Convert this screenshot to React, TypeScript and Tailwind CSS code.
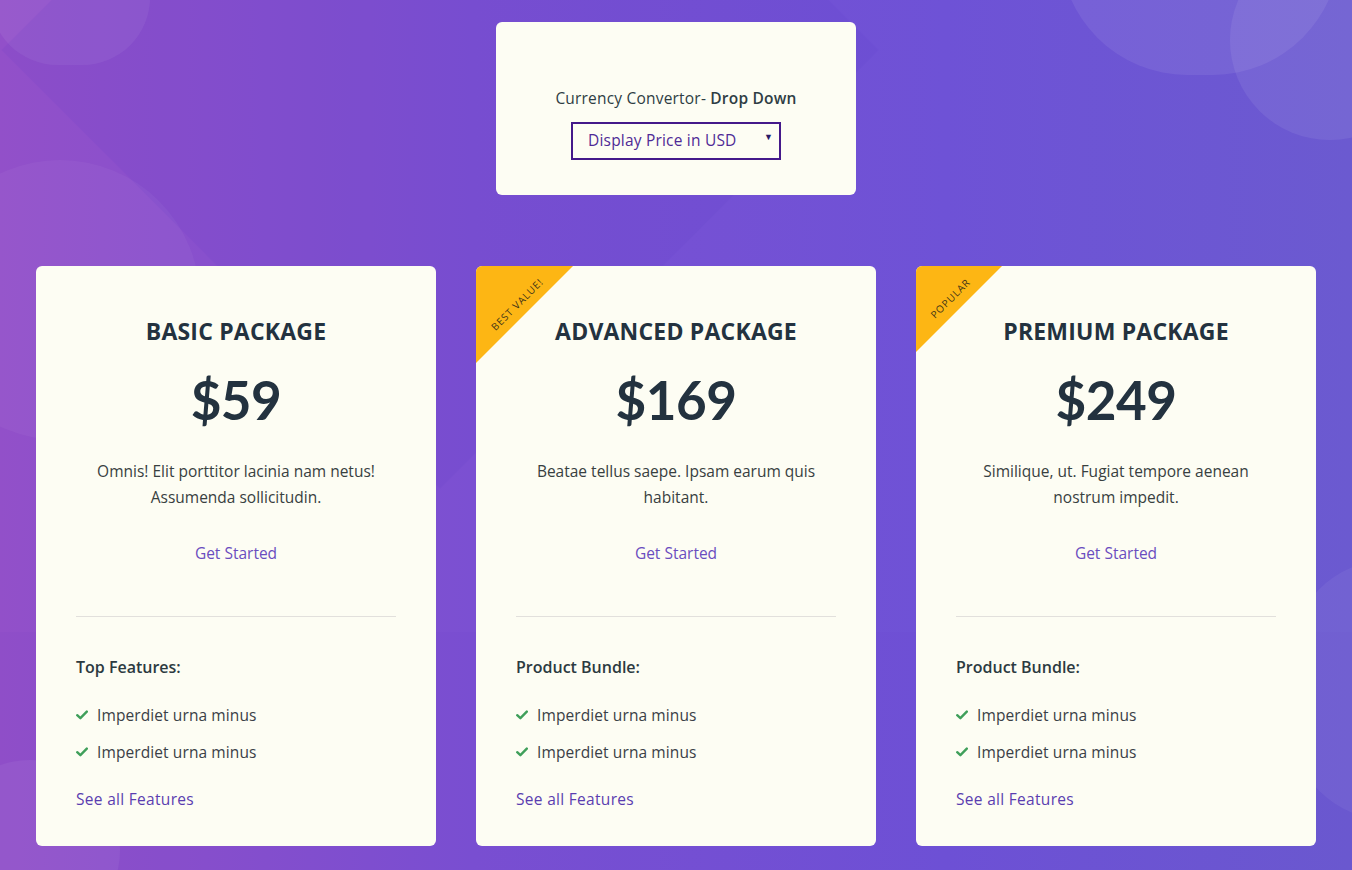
import React from "react";

type Plan = {
  title: string;
  price: string;
  desc: [string, string];
  heading: string;
  ribbon?: { label: string; inner: number; pad: number };
};

const plans: Plan[] = [
  {
    title: "BASIC PACKAGE",
    price: "$59",
    desc: ["Omnis! Elit porttitor lacinia nam netus!", "Assumenda sollicitudin."],
    heading: "Top Features:",
  },
  {
    title: "ADVANCED PACKAGE",
    price: "$169",
    desc: ["Beatae tellus saepe. Ipsam earum quis", "habitant."],
    heading: "Product Bundle:",
    ribbon: { label: "BEST VALUE!", inner: 97, pad: 40 },
  },
  {
    title: "PREMIUM PACKAGE",
    price: "$249",
    desc: ["Similique, ut. Fugiat tempore aenean", "nostrum impedit."],
    heading: "Product Bundle:",
    ribbon: { label: "POPULAR", inner: 86, pad: 34 },
  },
];

function Check() {
  return (
    <svg width="12" height="10" viewBox="0 0 12 10" className="shrink-0">
      <path d="M1.2 5.2 L4.4 8.2 L10.8 1.6" fill="none" stroke="#3f9f5a" strokeWidth="2.4" strokeLinecap="round" strokeLinejoin="round" />
    </svg>
  );
}

function Ribbon({ r }: { r: NonNullable<Plan["ribbon"]> }) {
  const size = r.inner;
  return (
    <div className="absolute left-0 top-0 pointer-events-none" style={{ width: size, height: size }}>
      <svg width={size} height={size} viewBox={`0 0 ${size} ${size}`} className="absolute left-0 top-0">
        <polygon points={`0,0 ${size},0 0,${size}`} fill="#fdb614" />
      </svg>
      <div className="absolute left-0 top-0 flex items-center justify-center" style={{ width: r.pad * 2 + 2, height: r.pad * 2 - 4 }}>
        <span className="-rotate-45 text-[10px] leading-[11px] tracking-[0.9px] text-[#3e3418] whitespace-nowrap">
          {r.label}
        </span>
      </div>
    </div>
  );
}

function Card({ p }: { p: Plan }) {
  return (
    <div className="relative h-[580px] rounded-[6px] bg-[#fdfdf3] overflow-hidden px-10 pt-[51px] flex flex-col text-[#2c3b45]">
      {p.ribbon && <Ribbon r={p.ribbon} />}
      <h2 className="text-center text-[23px] leading-[28px] font-bold tracking-[0.2px] text-[#23323f]">{p.title}</h2>
      <div
        className="mt-[25px] text-center text-[53px] leading-[60px] font-bold text-[#23323f] tracking-[-0.5px]"
        style={{ fontFamily: "Lato, 'Open Sans', sans-serif" }}
      >
        {p.price}
      </div>
      <p className="mt-[28px] text-center text-[15.5px] leading-[26px] text-[#38403f]">
        {p.desc[0]}
        <br />
        {p.desc[1]}
      </p>
      <div className="mt-[31px] text-center text-[15.5px] leading-[24px] text-[#6a4dbf]">Get Started</div>
      <div className="mt-[51px] h-px bg-[#e2e0dc]" />
      <div className="mt-[38px] text-[16px] leading-[24px] font-semibold text-[#2c3a40]">{p.heading}</div>
      <ul className="mt-[24px] flex flex-col gap-[13px]">
        {[0, 1].map((i) => (
          <li key={i} className="flex items-center gap-[9px] text-[15.5px] leading-[24px] tracking-[0.1px] text-[#3a4046]">
            <Check />
            <span>Imperdiet urna minus</span>
          </li>
        ))}
      </ul>
      <div className="mt-[23px] text-[15.5px] leading-[24px] tracking-[0.3px] text-[#5a3db0]">See all Features</div>
    </div>
  );
}

export default function App() {
  return (
    <div
      className="relative min-h-[870px] w-full overflow-hidden bg-[linear-gradient(90deg,#9250c9_0%,#7b50d2_35%,#6e52d6_70%,#6b5ad0_100%)]"
      style={{ fontFamily: "'Open Sans', 'Liberation Sans', sans-serif" }}
    >
      {/* decorative background shapes */}
      <div className="absolute -left-[10px] -top-[70px] w-[160px] h-[135px] rounded-full bg-white/[0.06]" />
      <div className="absolute -left-[80px] top-[160px] w-[280px] h-[280px] rounded-full bg-white/[0.04]" />
      <div className="absolute left-[130px] -top-[260px] w-[620px] h-[620px] rotate-45 bg-[#5a3cc8]/[0.10]" />
      <div className="absolute left-[1060px] -top-[180px] w-[280px] h-[255px] rounded-full bg-white/[0.07]" />
      <div className="absolute left-[1230px] -top-[60px] w-[200px] h-[200px] rounded-full bg-white/[0.07]" />
      <div className="absolute left-[1290px] top-[560px] w-[200px] h-[260px] rounded-full bg-white/[0.05]" />
      <div className="absolute -left-[60px] top-[760px] w-[180px] h-[180px] rounded-full bg-white/[0.05]" />
      <div className="absolute left-0 top-[632px] w-full h-[240px] bg-[#5a3cc8]/[0.05]" />

      <div className="relative flex flex-col items-center pt-[22px]">
        <div className="w-[360px] h-[173px] rounded-[6px] bg-[#fdfdf3] flex flex-col items-center pt-[65px]">
          <div className="text-[15.5px] leading-[22px] tracking-[0.2px] text-[#2f3d44]">
            Currency Convertor- <span className="font-semibold">Drop Down</span>
          </div>
          <div className="relative mt-[13px] w-[210px] h-[38px] border-2 border-[#44198a] flex items-center pl-[15px] text-[15.5px] tracking-[0.2px] text-[#4f2a96]">
            Display Price in USD
            <span className="absolute right-[6px] top-[8px] text-[9px] leading-[10px] text-[#2a1a66]">▼</span>
          </div>
        </div>

        <div className="mt-[71px] w-[1280px] grid grid-cols-3 gap-10">
          {plans.map((p) => (
            <Card key={p.title} p={p} />
          ))}
        </div>
      </div>
    </div>
  );
}
